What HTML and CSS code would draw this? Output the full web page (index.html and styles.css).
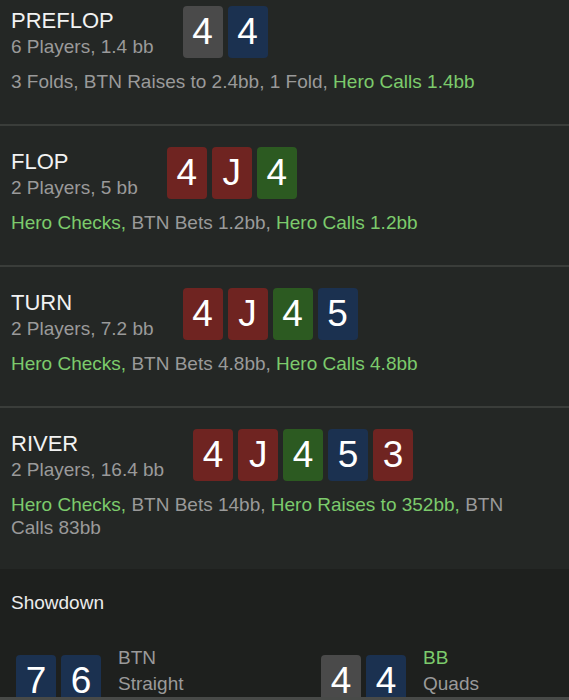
FILE: index.html
```html
<!DOCTYPE html>
<html lang="en">
<head>
    <meta charset="UTF-8">
    <meta name="viewport" content="width=device-width, initial-scale=1.0">
    <title>Hand Replay</title>
    <link rel="stylesheet" href="styles.css">
</head>
<body>

<div class="replay">
    <!-- streets -->
    <div class="street">
        <div class="street-head">
            <div class="street-info">
                <div class="street-name">PREFLOP</div>
                <div class="street-pot">6 Players, 1.4 bb</div>
            </div>
            <div class="cards">
                <div class="card gray">4</div>
                <div class="card blue">4</div>
            </div>
        </div>
        <div class="actions">3 Folds, BTN Raises to 2.4bb, 1 Fold, <span class="hero">Hero Calls 1.4bb</span></div>
    </div>

    <div class="street">
        <div class="street-head">
            <div class="street-info">
                <div class="street-name">FLOP</div>
                <div class="street-pot">2 Players, 5 bb</div>
            </div>
            <div class="cards">
                <div class="card red">4</div>
                <div class="card red">J</div>
                <div class="card green">4</div>
            </div>
        </div>
        <div class="actions"><span class="hero">Hero Checks,</span> BTN Bets 1.2bb, <span class="hero">Hero Calls 1.2bb</span></div>
    </div>

    <div class="street">
        <div class="street-head">
            <div class="street-info">
                <div class="street-name">TURN</div>
                <div class="street-pot">2 Players, 7.2 bb</div>
            </div>
            <div class="cards">
                <div class="card red">4</div>
                <div class="card red">J</div>
                <div class="card green">4</div>
                <div class="card blue">5</div>
            </div>
        </div>
        <div class="actions"><span class="hero">Hero Checks,</span> BTN Bets 4.8bb, <span class="hero">Hero Calls 4.8bb</span></div>
    </div>

    <div class="street">
        <div class="street-head">
            <div class="street-info">
                <div class="street-name">RIVER</div>
                <div class="street-pot">2 Players, 16.4 bb</div>
            </div>
            <div class="cards">
                <div class="card red">4</div>
                <div class="card red">J</div>
                <div class="card green">4</div>
                <div class="card blue">5</div>
                <div class="card red">3</div>
            </div>
        </div>
        <div class="actions"><span class="hero">Hero Checks,</span> BTN Bets 14bb, <span class="hero">Hero Raises to 352bb,</span> BTN Calls 83bb</div>
    </div>

    <!-- showdown -->
    <div class="showdown">
        <div class="showdown-title">Showdown</div>
        <div class="hands">
            <div class="hand">
                <div class="cards">
                    <div class="card blue">7</div>
                    <div class="card blue">6</div>
                </div>
                <div class="hand-info">
                    <div class="player">BTN</div>
                    <div class="hand-rank">Straight</div>
                </div>
            </div>
            <div class="hand">
                <div class="cards">
                    <div class="card gray">4</div>
                    <div class="card blue">4</div>
                </div>
                <div class="hand-info">
                    <div class="player hero">BB</div>
                    <div class="hand-rank">Quads</div>
                </div>
            </div>
        </div>
    </div>
</div>

<div class="toolbar"></div>

</body>
</html>
```

FILE: styles.css
```css
body {
    font-family: "Liberation Sans", Arial, sans-serif;
    background-color: #242725;
    color: #9a9a9a;
    margin: 0;
    padding: 0;
    height: 100vh;
    display: flex;
    flex-direction: column;
    overflow: hidden;
}
.replay {
    height: 697px;
    overflow: hidden;
    flex-shrink: 0;
}
.street {
    padding: 21px 20px 31px 11px;
    border-bottom: 2px solid #3a3d3a;
}
.street:first-child {
    padding-top: 6px;
}
.street:nth-child(4) {
    border-bottom: none;
    padding-bottom: 30px;
}
.street-head {
    display: flex;
    align-items: center;
    gap: 29px;
}
.street-name {
    font-size: 22px;
    line-height: 29px;
    color: #f2f2f2;
}
.street-pot {
    font-size: 19px;
    line-height: 23px;
}
.cards {
    display: flex;
    gap: 5px;
}
.card {
    width: 40px;
    height: 52px;
    border-radius: 4px;
    display: flex;
    align-items: center;
    justify-content: center;
    color: #fff;
    font-size: 37px;
}
.card.gray {
    background-color: #4a4a4a;
}
.card.blue {
    background-color: #1b3150;
}
.card.red {
    background-color: #6f2421;
}
.card.green {
    background-color: #2c5a21;
}
.actions {
    margin-top: 12px;
    font-size: 19px;
    line-height: 23px;
}
.hero {
    color: #7ccb6c;
}
.showdown {
    background-color: #1e201e;
    padding: 22px 11px 0 16px;
    height: 100%;
}
.showdown-title {
    margin-left: -5px;
    font-size: 19px;
    line-height: 23px;
    color: #ececec;
}
.hands {
    display: grid;
    grid-template-columns: 305px 1fr;
    margin-top: 31px;
}
.hand {
    display: flex;
    align-items: flex-start;
    gap: 17px;
}
.hand .cards {
    margin-top: 10px;
}
.hand-info {
    font-size: 19px;
    line-height: 26px;
}
.toolbar {
    flex: 1;
    background-color: #484a48;
}
```
